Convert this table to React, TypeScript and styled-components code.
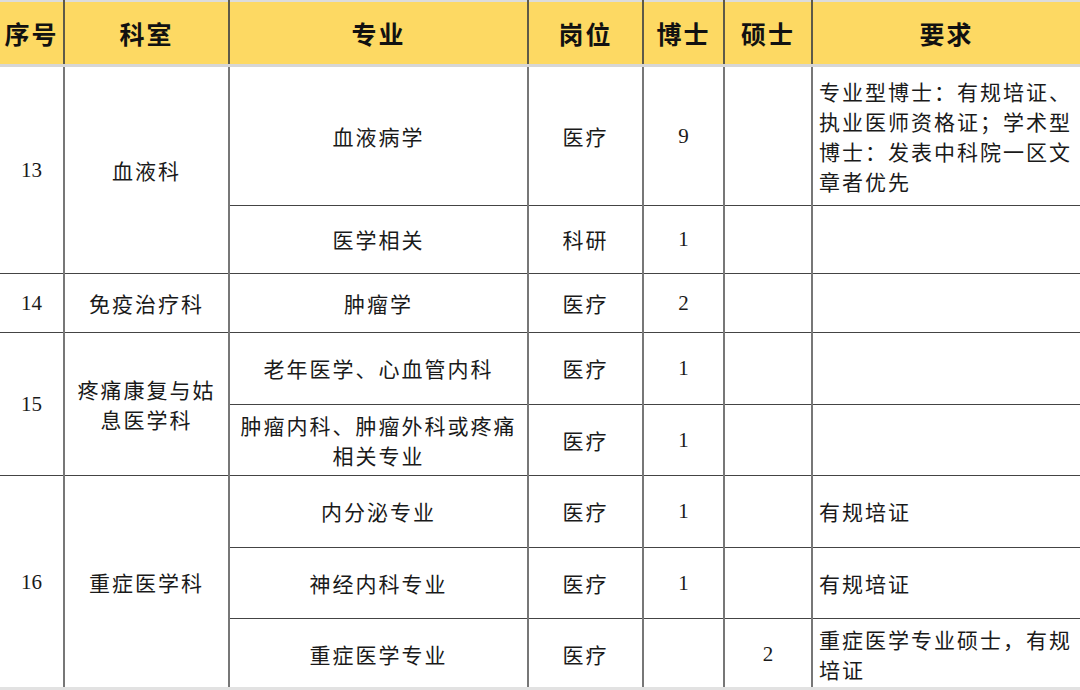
import React from 'react';
import styled, { createGlobalStyle } from 'styled-components';

const GlobalStyle = createGlobalStyle`
  html, body {
    margin: 0;
    padding: 0;
    background: #ffffff;
    overflow: hidden;
  }
  body {
    font-family: "Noto Sans CJK SC", "Liberation Serif", serif;
  }
`;

const Page = styled.div`
  width: 1080px;
  height: 690px;
  overflow: hidden;
  border-bottom: 3px solid #e2e2e2;
  box-sizing: border-box;
`;

const Table = styled.table`
  width: 1080px;
  border-collapse: collapse;
  table-layout: fixed;
  color: #111111;
`;

const HeadRow = styled.tr`
  height: 64px;
  background: #fdd963;
  border-top: 2px solid #dcdcdc;
  border-bottom: 3px solid #d6d6d6;
`;

const HeadCell = styled.th`
  font-family: "Noto Sans CJK SC", sans-serif;
  font-size: 25px;
  font-weight: 700;
  letter-spacing: 2px;
  text-align: center;
  vertical-align: middle;
  padding: 0;
  border-left: 2px solid #5e5a48;
  &:first-child {
    border-left: none;
  }
`;

const Row = styled.tr<{ $h: number }>`
  height: ${(p) => p.$h}px;
`;

const Cell = styled.td<{ $left?: boolean; $num?: boolean; $first?: boolean }>`
  font-family: ${(p) =>
    p.$num ? '"Liberation Serif", serif' : '"Noto Sans CJK SC", sans-serif'};
  font-size: 21px;
  font-weight: 400;
  letter-spacing: ${(p) => (p.$num ? '0' : '2px')};
  line-height: 30px;
  text-align: ${(p) => (p.$left ? 'left' : 'center')};
  vertical-align: middle;
  padding: ${(p) => (p.$left ? '0 4px 0 6px' : '0 6px')};
  border-left: ${(p) => (p.$first ? 'none' : '2px solid #777777')};
  border-top: 1px solid #444444;
  border-bottom: 1px solid #444444;
  color: #1a1a1a;
`;

const NumCell = styled(Cell).attrs({ $num: true })``;

const App: React.FC = () => {
  return (
    <>
      <GlobalStyle />
      <Page>
        <Table>
          <colgroup>
            <col style={{ width: 64 }} />
            <col style={{ width: 165 }} />
            <col style={{ width: 299 }} />
            <col style={{ width: 115 }} />
            <col style={{ width: 81 }} />
            <col style={{ width: 88 }} />
            <col style={{ width: 268 }} />
          </colgroup>
          <thead>
            <HeadRow>
              <HeadCell>序号</HeadCell>
              <HeadCell>科室</HeadCell>
              <HeadCell>专业</HeadCell>
              <HeadCell>岗位</HeadCell>
              <HeadCell>博士</HeadCell>
              <HeadCell>硕士</HeadCell>
              <HeadCell>要求</HeadCell>
            </HeadRow>
          </thead>
          <tbody>
            <Row $h={140}>
              <NumCell $first rowSpan={2}>13</NumCell>
              <Cell rowSpan={2}>血液科</Cell>
              <Cell>血液病学</Cell>
              <Cell>医疗</Cell>
              <NumCell>9</NumCell>
              <NumCell />
              <Cell $left>
                专业型博士：有规培证、执业医师资格证；学术型博士：发表中科院一区文章者优先
              </Cell>
            </Row>
            <Row $h={68}>
              <Cell>医学相关</Cell>
              <Cell>科研</Cell>
              <NumCell>1</NumCell>
              <NumCell />
              <Cell $left />
            </Row>
            <Row $h={59}>
              <NumCell $first>14</NumCell>
              <Cell>免疫治疗科</Cell>
              <Cell>肿瘤学</Cell>
              <Cell>医疗</Cell>
              <NumCell>2</NumCell>
              <NumCell />
              <Cell $left />
            </Row>
            <Row $h={72}>
              <NumCell $first rowSpan={2}>15</NumCell>
              <Cell rowSpan={2}>疼痛康复与姑息医学科</Cell>
              <Cell>老年医学、心血管内科</Cell>
              <Cell>医疗</Cell>
              <NumCell>1</NumCell>
              <NumCell />
              <Cell $left />
            </Row>
            <Row $h={71}>
              <Cell>肿瘤内科、肿瘤外科或疼痛相关专业</Cell>
              <Cell>医疗</Cell>
              <NumCell>1</NumCell>
              <NumCell />
              <Cell $left />
            </Row>
            <Row $h={72}>
              <NumCell $first rowSpan={3}>16</NumCell>
              <Cell rowSpan={3}>重症医学科</Cell>
              <Cell>内分泌专业</Cell>
              <Cell>医疗</Cell>
              <NumCell>1</NumCell>
              <NumCell />
              <Cell $left>有规培证</Cell>
            </Row>
            <Row $h={71}>
              <Cell>神经内科专业</Cell>
              <Cell>医疗</Cell>
              <NumCell>1</NumCell>
              <NumCell />
              <Cell $left>有规培证</Cell>
            </Row>
            <Row $h={71}>
              <Cell>重症医学专业</Cell>
              <Cell>医疗</Cell>
              <NumCell />
              <NumCell>2</NumCell>
              <Cell $left>重症医学专业硕士，有规培证</Cell>
            </Row>
          </tbody>
        </Table>
      </Page>
    </>
  );
};

export default App;
